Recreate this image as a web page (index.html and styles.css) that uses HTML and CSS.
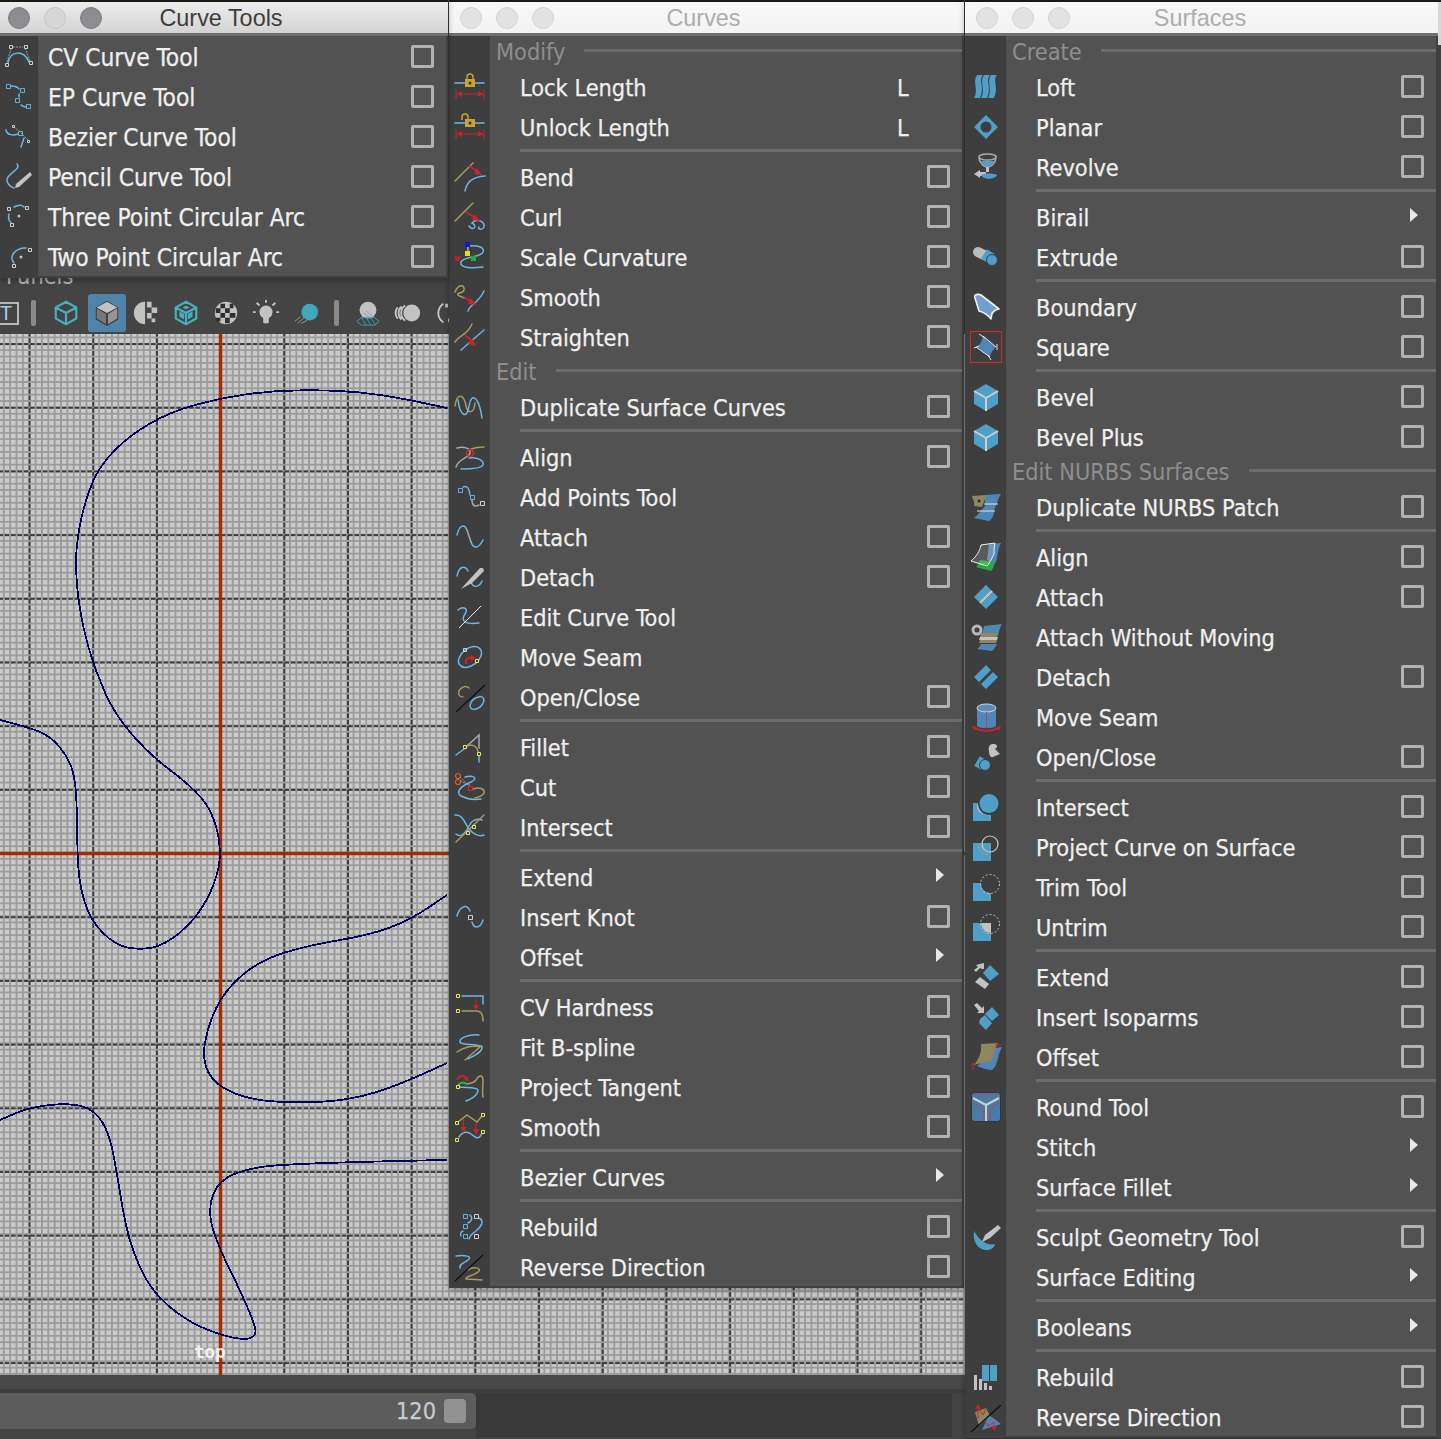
FILE: index.html
```
<!DOCTYPE html>
<html lang="en">
<head>
<meta charset="utf-8">
<title>Curve Tools, Curves, Surfaces menus</title>
<link rel="stylesheet" href="styles.css">
</head>
<body>
<div class="stage">
  <div class="scene">
    <div class="panels">Panels</div>
    <div class="shelf">
      <span class="tbtn">T</span>
      <span class="tsep"></span>
      <span class="tool tool-first"><svg viewBox="0 0 30 30"><path class="tl" d="M15 3L26 9V21L15 27L4 21V9zM4 9L15 15L26 9M15 15V27"/></svg></span>
      <span class="tool tool-on"><svg viewBox="0 0 30 30"><path class="fg2" d="M15 2L27 9V22L15 29L3 22V9z"/><path class="fg" d="M15 3L26 9L15 15L4 9z"/><path class="fd" d="M4 10L14 16V27L4 21z"/><path class="fm" d="M26 10L16 16V27L26 21z"/></svg></span>
      <span class="tool"><svg viewBox="0 0 30 30"><path class="fg" d="M14 3A12 12 0 0 0 14 27z"/><path class="fg" d="M16 3h5v6h-5zM21 9h6v6h-6zM16 15h5v6h-5zM21 21h4v4h-4z"/></svg></span>
      <span class="tool"><svg viewBox="0 0 30 30"><path class="tl" d="M15 3L26 9V21L15 27L4 21V9zM4 9L15 15L26 9M15 15V27"/><path class="fteal" d="M8 13l5 3v6l-5-3zM22 13l-5 3v6l5-3zM11 9l4-2 4 2-4 2z"/></svg></span>
      <span class="tool"><svg viewBox="0 0 30 30"><circle class="fg" cx="15" cy="15" r="12"/><path class="fdark" d="M9 5h5v5H9zM19 5h4v5h-4zM4 10h5v5H4zM14 10h5v5h-5zM9 15h5v5H9zM19 15h6v5h-6zM4 20h5v4H4zM14 20h5v6h-5z"/></svg></span>
      <span class="tool"><svg viewBox="0 0 30 30"><circle class="fg" cx="15" cy="14" r="7"/><rect class="fg" x="12" y="19" width="6" height="7" rx="1"/><path class="gs" d="M15 1V4M5 4L8 7M25 4L22 7M1 14H4M26 14H29"/></svg></span>
      <span class="tool"><svg viewBox="0 0 30 30"><circle class="fteal2" cx="19" cy="14" r="9"/><path class="gs1" d="M3 24L9 19M6 26L13 20M10 26L16 23"/></svg></span>
      <span class="tsep tsep-wide"></span>
      <span class="tool"><svg viewBox="0 0 30 30"><circle class="fg" cx="15" cy="12" r="9"/><path class="gs1" d="M9 14L18 21M13 13L21 19"/><path class="tl1" d="M3 24L8 20H22L27 24L22 28H8zM8 20L13 28M13 20L18 28M18 20L23 28"/></svg></span>
      <span class="tool"><svg viewBox="0 0 30 30"><circle class="fg" cx="19" cy="15" r="9"/><path class="gs" d="M12 7A9.500 9.500 0 0 0 12 23M8 8A9.500 9.500 0 0 0 8 22M4 9A9 9 0 0 0 4 21"/></svg></span>
      <span class="tool"><svg viewBox="0 0 30 30"><path class="gs" d="M10 5A12 12 0 0 0 10 25"/><path class="fg" d="M12 5h3v4h-3zM15 21h3v4h-3z"/></svg></span>
    </div>
    <div class="viewport">
      <svg class="overlay" viewBox="0 334 965 1041">
        <path class="axis" d="M220.500 334V1375M0 853.500H965"/>
        <path class="nurbs" d="M447 408L423.500 403Q400 398 380 395Q360 392 340 391Q320 390 295 390.500Q270 391 245 394.500Q220 398 195 405Q170 412 150 423.500Q130 435 115 450Q100 465 92.500 482.500Q85 500 80.500 522.500Q76 545 76 562.500Q76 580 79 602.500Q82 625 88.500 647.500Q95 670 105 692.500Q115 715 132.500 735Q150 755 170 770Q190 785 201 797.500Q212 810 217 830Q222 850 218.500 867.500Q215 885 205 902.500Q195 920 180 932.500Q165 945 152.500 947.500Q140 950 127.500 947.500Q115 945 102.500 932.500Q90 920 84 900Q78 880 77.500 850Q77 820 76.500 802.500Q76 785 73 772.500Q70 760 60 747.500Q50 735 35 730Q20 725 0 720"/>
        <path class="nurbs" d="M447 895L428.500 907.500Q410 920 390 927.500Q370 935 340 940Q310 945 285 952.500Q260 960 242.500 975Q225 990 216.500 1007.500Q208 1025 205 1042.500Q202 1060 208.500 1072.500Q215 1085 232.500 1092.500Q250 1100 275 1101.500Q300 1103 325 1101.500Q350 1100 375 1092.500Q400 1085 447 1063"/>
        <path class="nurbs" d="M0 1120L15 1113.500Q30 1107 50 1105Q70 1103 82.500 1106.500Q95 1110 102.500 1122.500Q110 1135 114 1157.500Q118 1180 123 1210Q128 1240 139 1265Q150 1290 167.500 1305Q185 1320 202.500 1327.500Q220 1335 232.500 1337.500Q245 1340 250.500 1338Q256 1336 255.500 1330.500Q255 1325 247.500 1307.500Q240 1290 230 1270Q220 1250 214 1232.500Q208 1215 211.500 1200Q215 1185 227.500 1177.500Q240 1170 265 1166.500Q290 1163 447 1160"/>
      </svg>
      <span class="camera">top</span>
    </div>
    <div class="strip"></div>
    <div class="timeline">
      <div class="slider"><span class="frame">120</span><span class="handle"></span></div>
      <div class="range"></div>
    </div>
  </div>

  <section class="win win-tools">
    <header class="bar bar-on"><span class="dot dot-on"></span><span class="dot"></span><span class="dot dot-on"></span><h2 class="title">Curve Tools</h2></header>
    <div class="menu">
      <div class="row"><span class="slot"><svg viewBox="0 0 30 30"><path class="b" d="M4 21C6 8 20 8 25 20"/><path class="g1" d="M3 20L7 7M9 5H19M21 6L26 19"/><path class="sg" d="M1.500 21.500h3v3h-3zM5.500 3.500h3v3h-3zM20.500 3.500h3v3h-3zM25.500 19.500h3v3h-3z"/></svg></span><span class="lbl">CV Curve Tool</span><span class="box"></span></div>
      <div class="row"><span class="slot"><svg viewBox="0 0 30 30"><path class="b" d="M7 4C11 4 14 5 15 7M15 12V15M17 23C19 24 20 25 22 25"/><path class="sb" d="M2.500 2.500h4v4h-4zM16.500 6.500h4v4h-4zM11.500 16.500h4v4h-4zM22.500 22.500h4v4h-4z"/></svg></span><span class="lbl">EP Curve Tool</span><span class="box"></span></div>
      <div class="row"><span class="slot"><svg viewBox="0 0 30 30"><path class="b" d="M2 8C3 13 9 14 14 12M17 25L20 16"/><path class="g1" d="M10 5L17 11L25 19"/><path class="sg" d="M8.500 3.500h2v2h-2zM23.500 18.500h2v2h-2z"/><path class="sb" d="M14.500 9.500h4v4h-4z"/></svg></span><span class="lbl">Bezier Curve Tool</span><span class="box"></span></div>
      <div class="row"><span class="slot"><svg viewBox="0 0 30 30"><path class="b" d="M13 2C17 6 8 10 4 15C1 20 6 25 10 26"/><path class="fg" d="M26 10L28 13L15 25L11 26L12 22z"/></svg></span><span class="lbl">Pencil Curve Tool</span><span class="box"></span></div>
      <div class="row"><span class="slot"><svg viewBox="0 0 30 30"><path class="b" d="M10 5C14 3 18 3 20 5M5 12C4 16 5 19 7 21"/><path class="sg" d="M3.500 5.500h3v3h-3zM21.500 4.500h3v3h-3zM6.500 21.500h3v3h-3z"/><circle class="fg" cx="15" cy="14" r="1.500"/></svg></span><span class="lbl">Three Point Circular Arc</span><span class="box"></span></div>
      <div class="row"><span class="slot"><svg viewBox="0 0 30 30"><path class="b" d="M10 21C5 15 10 6 22 6"/><path class="sg" d="M24.500 6.500h3v3h-3zM8.500 22.500h3v3h-3z"/><circle class="fg" cx="17" cy="15" r="1.500"/></svg></span><span class="lbl">Two Point Circular Arc</span><span class="box"></span></div>
    </div>
  </section>

  <section class="win win-curves">
    <header class="bar"><span class="dot"></span><span class="dot"></span><span class="dot"></span><h2 class="title">Curves</h2></header>
    <div class="menu">
      <div class="head"><span class="hname">Modify</span><span class="hline"></span></div>
      <div class="row"><span class="slot"><svg viewBox="0 0 30 30"><path class="b" d="M0 11H29"/><path class="lock" d="M12 8V5a3 3 0 0 1 6 0V8"/><rect class="fgold" x="10" y="7" width="10" height="8"/><circle class="fdark" cx="15" cy="11" r="1.500"/><path class="r1" d="M1 17V27M29 17V27M1 22H29"/><path class="fr" d="M2 22l5-3v6zM28 22l-5-3v6z"/></svg></span><span class="lbl">Lock Length</span><span class="key">L</span></div>
      <div class="row"><span class="slot"><svg viewBox="0 0 30 30"><path class="b" d="M0 11H29"/><path class="lock" d="M7 8V5a3 3 0 0 1 6 0V7"/><rect class="fgold" x="10" y="7" width="10" height="8"/><circle class="fdark" cx="15" cy="11" r="1.500"/><path class="r1" d="M1 17V27M29 17V27M1 22H29"/><path class="fr" d="M2 22l5-3v6zM28 22l-5-3v6z"/></svg></span><span class="lbl">Unlock Length</span><span class="key">L</span></div>
      <div class="sep"></div>
      <div class="row"><span class="slot"><svg viewBox="0 0 30 30"><path class="t" d="M0 19L18 1"/><path class="b" d="M10 29C12 19 18 15 30 14"/><path class="r" d="M14 4L22 9"/><path class="fr" d="M27 13L19 12L22 6z"/></svg></span><span class="lbl">Bend</span><span class="box"></span></div>
      <div class="row"><span class="slot"><svg viewBox="0 0 30 30"><path class="t" d="M0 19L18 1"/><path class="b" d="M14 24C18 30 23 24 17 21C22 15 30 20 29 25C27 29 22 27 24 25"/><path class="r" d="M11 10L19 15"/><path class="fr" d="M25 19L17 18L20 12z"/></svg></span><span class="lbl">Curl</span><span class="box"></span></div>
      <div class="row"><span class="slot"><svg viewBox="0 0 30 30"><path class="b" d="M14 4C22 3 30 5 28 10C26 16 8 14 6 20C4 27 20 26 28 25"/><path class="w1" d="M13 3V11"/><rect class="fblue0" x="10" y="0" width="5" height="5"/><rect class="fyel" x="10" y="9" width="5" height="5"/><rect class="fred0" x="0" y="14" width="5" height="5"/><rect class="fgreen" x="16" y="14" width="5" height="5"/></svg></span><span class="lbl">Scale Curvature</span><span class="box"></span></div>
      <div class="row"><span class="slot"><svg viewBox="0 0 30 30"><path class="t" d="M0 10C3 2 10 2 9 8C8 12 1 10 3 13C5 15 8 15 10 16"/><path class="b" d="M13 29C15 22 23 22 29 9"/><path class="r" d="M9 15L15 19"/><path class="fr" d="M21 23L13 22L16 16z"/></svg></span><span class="lbl">Smooth</span><span class="box"></span></div>
      <div class="row"><span class="slot"><svg viewBox="0 0 30 30"><path class="t" d="M0 20C5 12 12 14 17 2"/><path class="b" d="M6 28L29 8"/><path class="r" d="M10 13L16 18"/><path class="fr" d="M21 24L13 22L17 16z"/></svg></span><span class="lbl">Straighten</span><span class="box"></span></div>
      <div class="head"><span class="hname">Edit</span><span class="hline"></span></div>
      <div class="row"><span class="slot"><svg viewBox="0 0 30 30"><path class="t" d="M0 14C2 0 9 2 11 14C13 22 19 22 20 11"/><path class="b" d="M3 8C5 24 12 28 14 14C16 0 24 4 27 26"/></svg></span><span class="lbl">Duplicate Surface Curves</span><span class="box"></span></div>
      <div class="sep"></div>
      <div class="row"><span class="slot"><svg viewBox="0 0 30 30"><path class="g" d="M2 6C8 4 16 6 15 11C14 16 4 16 1 25"/><path class="t" d="M14 8C18 6 22 5 29 5"/><path class="b" d="M14 16C24 15 29 19 28 23C26 27 14 27 6 27"/><circle class="rc" cx="15" cy="11" r="3.500"/></svg></span><span class="lbl">Align</span><span class="box"></span></div>
      <div class="row"><span class="slot"><svg viewBox="0 0 30 30"><path class="b" d="M8 5C12 3 14 6 15 13"/><path class="g" d="M17 18C17 24 20 25 24 23"/><path class="sb" d="M3.500 6.500h4v4h-4zM15.500 13.500h4v4h-4z"/><path class="sg" d="M25.500 19.500h4v4h-4z"/></svg></span><span class="lbl">Add Points Tool</span><span class="box box-none"></span></div>
      <div class="row"><span class="slot"><svg viewBox="0 0 30 30"><path class="b" d="M2 13C5 1 10 3 12 8M16 20C19 28 24 26 28 18"/><path class="g" d="M12 8L16 20"/></svg></span><span class="lbl">Attach</span><span class="box"></span></div>
      <div class="row"><span class="slot"><svg viewBox="0 0 30 30"><path class="b" d="M2 14C4 4 10 3 13 9M16 20C18 26 24 26 27 19"/><path class="fg" d="M28 6L29 9L17 21L6 27L14 18L25 6z"/></svg></span><span class="lbl">Detach</span><span class="box"></span></div>
      <div class="row"><span class="slot"><svg viewBox="0 0 30 30"><path class="b" d="M3 8C8 4 14 6 10 12C6 18 8 23 24 21"/><path class="w1" d="M4 26L26 4"/></svg></span><span class="lbl">Edit Curve Tool</span><span class="box box-none"></span></div>
      <div class="row"><span class="slot"><svg viewBox="0 0 30 30"><ellipse class="b" cx="15" cy="15" rx="13" ry="8.500" transform="rotate(-38 15 15)"/><path class="r" d="M11 22C10 17 13 15 17 16"/><path class="fr" d="M21 16L16 13V19z"/><path class="sg" d="M8.500 6.500h3v3h-3z"/><path class="sy" d="M20.500 17.500h3v3h-3z"/></svg></span><span class="lbl">Move Seam</span><span class="box box-none"></span></div>
      <div class="row"><span class="slot"><svg viewBox="0 0 30 30"><path class="t" d="M14 6C9 2 2 8 4 13C5 15 6 15 8 15"/><ellipse class="b" cx="22" cy="21" rx="8" ry="5" transform="rotate(-40 22 21)"/><path class="k1" d="M1 30L30 3"/></svg></span><span class="lbl">Open/Close</span><span class="box"></span></div>
      <div class="sep"></div>
      <div class="row"><span class="slot"><svg viewBox="0 0 30 30"><path class="g" d="M12 14L24 3V16"/><path class="t" d="M11 15C14 12 22 12 23 20"/><path class="b" d="M1 23L9 17M24 24V30"/><path class="sy" d="M8.500 13.500h3v3h-3zM22.500 20.500h3v3h-3z"/></svg></span><span class="lbl">Fillet</span><span class="box"></span></div>
      <div class="row"><span class="slot"><svg viewBox="0 0 30 30"><circle class="orange" cx="3" cy="4" r="2.500"/><circle class="orange" cx="3" cy="10" r="2.500"/><path class="g1" d="M5 5L15 15M5 9L15 13"/><path class="b" d="M10 5C18 3 24 6 16 10C6 14 0 20 6 24C12 27 20 28 26 27"/><path class="t" d="M18 17C26 14 30 18 29 21C28 24 24 25 20 26"/><path class="sr" d="M13.500 14.500h4v4h-4z"/></svg></span><span class="lbl">Cut</span><span class="box"></span></div>
      <div class="row"><span class="slot"><svg viewBox="0 0 30 30"><path class="b" d="M0 3C8 2 10 12 14 17C18 22 24 25 29 23M1 22C5 26 10 22 14 14C17 8 22 6 27 8"/><path class="t" d="M1 30L29 3"/><path class="sy" d="M11.500 19.500h3v3h-3zM17.500 13.500h3v3h-3z"/></svg></span><span class="lbl">Intersect</span><span class="box"></span></div>
      <div class="sep"></div>
      <div class="row"><span class="slot"></span><span class="lbl">Extend</span><span class="sub"></span></div>
      <div class="row"><span class="slot"><svg viewBox="0 0 30 30"><path class="b" d="M2 14C5 3 13 2 15 9M17 20C19 27 25 27 28 18"/><path class="sg" d="M13.500 13.500h4v4h-4z"/></svg></span><span class="lbl">Insert Knot</span><span class="box"></span></div>
      <div class="row"><span class="slot"></span><span class="lbl">Offset</span><span class="sub"></span></div>
      <div class="sep"></div>
      <div class="row"><span class="slot"><svg viewBox="0 0 30 30"><path class="b" d="M7 4H28V12"/><path class="t" d="M7 19H22C26 19 28 22 28 29"/><path class="r1" d="M21 7V14"/><path class="fr" d="M21 18L18 13H24z"/><path class="sy" d="M1.500 2.500h3v3h-3zM1.500 17.500h3v3h-3z"/></svg></span><span class="lbl">CV Hardness</span><span class="box"></span></div>
      <div class="row"><span class="slot"><svg viewBox="0 0 30 30"><path class="b" d="M24 3C14 2 4 6 5 10C6 14 24 11 27 15C28 20 18 24 13 27"/><path class="t" d="M2 20C10 14 18 14 26 14L10 28"/></svg></span><span class="lbl">Fit B-spline</span><span class="box"></span></div>
      <div class="row"><span class="slot"><svg viewBox="0 0 30 30"><path class="t" d="M11 12C16 11 18 12 21 8C24 3 28 2 28 9C28 14 27 20 28 25"/><path class="green" d="M3 13C6 10 9 10 12 12"/><path class="r" d="M2 8C5 3 9 3 11 6"/><path class="fr" d="M14 9L9 8L12 4z"/><path class="b" d="M4 15C12 16 22 15 23 18C23 24 14 28 11 29"/><path class="sy" d="M1.500 13.500h3v3h-3z"/></svg></span><span class="lbl">Project Tangent</span><span class="box"></span></div>
      <div class="row"><span class="slot"><svg viewBox="0 0 30 30"><path class="t" d="M3 10L12 3L22 10L27 4"/><path class="b" d="M4 25C10 16 16 22 20 25C24 27 26 24 27 21"/><path class="r1" d="M8.500 7V16M21 10V18"/><path class="fr" d="M8.500 21L5.500 15H11.500zM21 23L18 17H24z"/><path class="sy" d="M0.500 9.500h3v3h-3zM26.500 1.500h3v3h-3zM26.500 18.500h3v3h-3zM0.500 26.500h3v3h-3z"/></svg></span><span class="lbl">Smooth</span><span class="box"></span></div>
      <div class="sep"></div>
      <div class="row"><span class="slot"></span><span class="lbl">Bezier Curves</span><span class="sub"></span></div>
      <div class="sep"></div>
      <div class="row"><span class="slot"><svg viewBox="0 0 30 30"><path class="b" d="M15 3C19 7 15 10 13 11M8 19C6 20 5 22 6 24M24 6C30 9 26 15 21 19C18 21 15 23 14 27"/><path class="sb" d="M8.500 2.500h4v4h-4zM8.500 12.500h4v4h-4zM8.500 22.500h4v4h-4z"/><path class="sg" d="M19.500 2.500h4v4h-4zM19.500 22.500h4v4h-4z"/></svg></span><span class="lbl">Rebuild</span><span class="box"></span></div>
      <div class="row"><span class="slot"><svg viewBox="0 0 30 30"><path class="b" d="M1 4C10 3 18 4 13 8C8 12 4 12 5 16"/><path class="t" d="M13 18C18 14 26 16 24 19C20 24 10 24 11 27C18 27 22 28 27 28"/><path class="k1" d="M0 29L28 3"/></svg></span><span class="lbl">Reverse Direction</span><span class="box"></span></div>
    </div>
  </section>

  <section class="win win-surfaces">
    <header class="bar"><span class="dot"></span><span class="dot"></span><span class="dot"></span><h2 class="title">Surfaces</h2></header>
    <div class="menu">
      <div class="head"><span class="hname">Create</span><span class="hline"></span></div>
      <div class="row"><span class="slot"><svg viewBox="0 0 30 30"><path class="fb" d="M6 3H12C7 8 14 15 9 26H3C8 18 1 10 6 3z"/><path class="fb" d="M13 3H19C14 8 21 15 16 26H10C15 18 8 10 13 3z"/><path class="fb" d="M20 3H26C21 8 28 15 23 26H17C22 18 15 10 20 3z"/></svg></span><span class="lbl">Loft</span><span class="box"></span></div>
      <div class="row"><span class="slot"><svg viewBox="0 0 30 30"><path class="fb" d="M15 3L27 15L15 27L3 15z"/><circle class="frail" cx="15" cy="15" r="5.500"/></svg></span><span class="lbl">Planar</span><span class="box"></span></div>
      <div class="row"><span class="slot"><svg viewBox="0 0 30 30"><ellipse class="g" cx="16.500" cy="5" rx="8.500" ry="3"/><path class="g" d="M8 5C8 10 12 15 16.500 15C21 15 25 10 25 5"/><path class="fb" d="M10 9H23C22 12 19 14.500 16.500 14.500C14 14.500 11 12 10 9z"/><path class="fg" d="M15 15h3v5h-3zM3 22l6-4v2h6v4H9v2z"/><path class="fb" d="M10 23C14 21 22 21 26 23C24 28 12 28 10 23z"/></svg></span><span class="lbl">Revolve</span><span class="box"></span></div>
      <div class="sep"></div>
      <div class="row"><span class="slot"></span><span class="lbl">Birail</span><span class="sub"></span></div>
      <div class="row"><span class="slot"><svg viewBox="0 0 30 30"><path class="thick-g" d="M7 10L13 13"/><path class="thick-b" d="M13 12L21 17"/><circle class="ring" cx="21" cy="18" r="5.500"/></svg></span><span class="lbl">Extrude</span><span class="box"></span></div>
      <div class="sep"></div>
      <div class="row"><span class="slot"><svg viewBox="0 0 30 30"><path class="patch" d="M4 6C2 2 8 2 10 3L28 17C22 18 20 22 20 27C16 22 12 20 8 19z"/></svg></span><span class="lbl">Boundary</span><span class="box"></span></div>
      <div class="row"><span class="slot"><span class="marked"><svg viewBox="0 0 30 30"><path class="fsteel" d="M12 4L25 15C22 18 20 20 19 25L5 15C9 13 11 9 12 4z"/><path class="w1" d="M8 2L14 6M3 16L8 14M26 12V18M17 23L20 28M12 4L25 15M5 15L19 25"/></svg></span></span><span class="lbl">Square</span><span class="box"></span></div>
      <div class="sep"></div>
      <div class="row"><span class="slot"><svg viewBox="0 0 30 30"><path class="fb" d="M15 2L27 9V22L15 29L3 22V9z"/><path class="gy" d="M15 16L3 9M15 16L27 9M15 16V29"/></svg></span><span class="lbl">Bevel</span><span class="box"></span></div>
      <div class="row"><span class="slot"><svg viewBox="0 0 30 30"><path class="fb" d="M15 2L27 9V22L15 29L3 22V9z"/><path class="gy" d="M15 16L3 9M15 16L27 9M15 16V29"/></svg></span><span class="lbl">Bevel Plus</span><span class="box"></span></div>
      <div class="head"><span class="hname">Edit NURBS Surfaces</span><span class="hline"></span></div>
      <div class="row"><span class="slot"><svg viewBox="0 0 30 30"><path class="fsteel" d="M14 3L30 2C26 8 26 13 23 18C24 23 20 28 18 29L3 26C8 22 10 18 14 14z"/><path class="w1" d="M6 19H24M13 12H27"/><path class="ftan" d="M1 4L15 3C14 8 12 12 11 15L3 14C4 10 2 8 1 4z"/><circle class="fdark" cx="8" cy="9" r="1.500"/></svg></span><span class="lbl">Duplicate NURBS Patch</span><span class="box"></span></div>
      <div class="sep"></div>
      <div class="row"><span class="slot"><svg viewBox="0 0 30 30"><path class="fsteel" d="M18 2L30 1C26 8 27 16 24 22L16 18z"/><path class="fgreen" d="M9 18L24 20C23 24 22 27 20 29L5 25C7 23 8 21 9 18z"/><path class="wo" d="M10 3L24 1C23 5 23 9 23 12C20 18 18 22 16 24L0 19C5 15 9 9 10 3z"/></svg></span><span class="lbl">Align</span><span class="box"></span></div>
      <div class="row"><span class="slot"><svg viewBox="0 0 30 30"><path class="fb" d="M15 3L20 8L8 20L3 15z"/><path class="fg" d="M20 8L22 10L10 22L8 20z"/><path class="fb" d="M22 10L27 15L15 27L10 22z"/></svg></span><span class="lbl">Attach</span><span class="box"></span></div>
      <div class="row"><span class="slot"><svg viewBox="0 0 30 30"><circle class="tyre" cx="6" cy="8" r="4"/><path class="fsteel" d="M13 4L31 2C28 7 28 10 27 14L10 14C12 11 12 8 13 4zM10 22L26 22C24 26 22 28 21 29L6 27C8 26 9 24 10 22z"/><path class="ftan" d="M10 11H27L26 15H9zM9 18H26L25 21H8z"/><path class="fg" d="M9 15H27L26 18H8z"/></svg></span><span class="lbl">Attach Without Moving</span><span class="box box-none"></span></div>
      <div class="row"><span class="slot"><svg viewBox="0 0 30 30"><path class="fb" d="M15 3L20 8L8 20L3 15zM22 10L27 15L15 27L10 22z"/></svg></span><span class="lbl">Detach</span><span class="box"></span></div>
      <div class="row"><span class="slot"><svg viewBox="0 0 30 30"><path class="fsteel" d="M6 6H25V24C22 27 9 27 6 24z"/><ellipse class="cap" cx="15.500" cy="6" rx="9.500" ry="4"/><path class="dash-r" d="M15.500 10V26"/><path class="r" d="M3 25C8 30 23 30 28 25"/><path class="fr" d="M1 24L6 25L3 29zM30 24L25 25L28 29z"/></svg></span><span class="lbl">Move Seam</span><span class="box box-none"></span></div>
      <div class="row"><span class="slot"><svg viewBox="0 0 30 30"><path class="fg" d="M21 2C26 2 28 4 24 7L29 12L22 15C19 16 18 12 18 9C17 6 18 3 21 2z"/><path class="thick-b" d="M6 19L13 23"/><circle class="ring" cx="14" cy="23" r="5.500"/></svg></span><span class="lbl">Open/Close</span><span class="box"></span></div>
      <div class="sep"></div>
      <div class="row"><span class="slot"><svg viewBox="0 0 30 30"><rect class="fb" x="2" y="11" width="18" height="18"/><path class="gs" d="M7 13C7 20 13 22 19 22"/><circle class="frail" cx="18" cy="12" r="11"/><circle class="fb" cx="18" cy="11.500" r="9.500"/></svg></span><span class="lbl">Intersect</span><span class="box"></span></div>
      <div class="row"><span class="slot"><svg viewBox="0 0 30 30"><rect class="fb" x="2" y="11" width="18" height="18"/><circle class="gr" cx="19" cy="12" r="8"/><path class="gs1" d="M7 14C8 20 13 22 17 23M10 12C10 17 13 19 16 20"/></svg></span><span class="lbl">Project Curve on Surface</span><span class="box"></span></div>
      <div class="row"><span class="slot"><svg viewBox="0 0 30 30"><rect class="fb" x="2" y="11" width="18" height="18"/><circle class="frail" cx="19" cy="12" r="9"/><circle class="dashc" cx="19" cy="12" r="9.500"/></svg></span><span class="lbl">Trim Tool</span><span class="box"></span></div>
      <div class="row"><span class="slot"><svg viewBox="0 0 30 30"><rect class="fb" x="2" y="11" width="18" height="18"/><circle class="frail" cx="19" cy="12" r="9"/><path class="fg" d="M10 11H20V21C14 21 10 16 10 11z"/><circle class="dashc" cx="19" cy="12" r="9.500"/></svg></span><span class="lbl">Untrim</span><span class="box"></span></div>
      <div class="sep"></div>
      <div class="row"><span class="slot"><svg viewBox="0 0 30 30"><path class="fb" d="M19 3L28 12L19 19L12 11z"/><path class="fg" d="M9 15L18 22L14 27L4 20z"/><path class="fg" d="M13 1V7H11L9 6L5 10L3 8L7 5L5 3z"/></svg></span><span class="lbl">Extend</span><span class="box"></span></div>
      <div class="row"><span class="slot"><svg viewBox="0 0 30 30"><path class="fb" d="M21 5L28 13L21 19L14 12zM9 17L14 13L21 21L15 28L8 21z"/><path class="fg" d="M3 3L6 1L11 6L13 4V11H6L8 9z"/></svg></span><span class="lbl">Insert Isoparms</span><span class="box"></span></div>
      <div class="row"><span class="slot"><svg viewBox="0 0 30 30"><path class="fsteel" d="M12 8L31 5C26 14 27 24 21 28C15 28 9 25 6 24C11 21 13 14 12 8z"/><path class="ftan" d="M10 2L27 1C23 7 24 14 20 19C14 20 8 21 3 23C8 17 11 10 10 2z"/><path class="r1" d="M25 3H30M2 21V28"/><path class="fr" d="M24 3l3-2v4zM2 20l-2 3h4z"/></svg></span><span class="lbl">Offset</span><span class="box"></span></div>
      <div class="sep"></div>
      <div class="row"><span class="slot"><svg viewBox="0 0 30 30"><rect class="rnd" x="0.500" y="0.500" width="29" height="29" rx="3"/><path class="gy" d="M2 6L15 13L28 6M15 13V29"/><path class="dash-r" d="M2 11L13 17V29M28 11L19 17V29M3 2H27"/></svg></span><span class="lbl">Round Tool</span><span class="box"></span></div>
      <div class="row"><span class="slot"></span><span class="lbl">Stitch</span><span class="sub"></span></div>
      <div class="row"><span class="slot"></span><span class="lbl">Surface Fillet</span><span class="sub"></span></div>
      <div class="sep"></div>
      <div class="row"><span class="slot"><svg viewBox="0 0 30 30"><path class="fb" d="M3 9C1 20 8 28 15 28C20 28 23 26 24 22C16 24 8 18 3 9z"/><path class="fg" d="M27 3L30 6L19 16L11 20L14 13z"/></svg></span><span class="lbl">Sculpt Geometry Tool</span><span class="box"></span></div>
      <div class="row"><span class="slot"></span><span class="lbl">Surface Editing</span><span class="sub"></span></div>
      <div class="sep"></div>
      <div class="row"><span class="slot"></span><span class="lbl">Booleans</span><span class="sub"></span></div>
      <div class="sep"></div>
      <div class="row"><span class="slot"><svg viewBox="0 0 30 30"><path class="fg" d="M3 13h3v15H3zM8 17h3v11H8zM13 21h3v7h-3zM18 24h3v4h-3z"/><path class="fb" d="M11 3h7v16h-7zM19 3h7v16h-7z"/></svg></span><span class="lbl">Rebuild</span><span class="box"></span></div>
      <div class="row"><span class="slot"><svg viewBox="0 0 30 30"><path class="ftan" d="M4 10L15 6L19 14L8 24z"/><path class="fsteel" d="M18 13L30 22L11 28z"/><path class="r1" d="M7 17V6L12 13L15 7M23 27V20L17 24L14 19"/><path class="fr" d="M7 2l-3 5h6zM23 29l-3-5h6z"/><path class="k1" d="M0 30L30 3"/></svg></span><span class="lbl">Reverse Direction</span><span class="box"></span></div>
    </div>
  </section>
  <span class="scroller"></span>
</div>
</body>
</html>
```

FILE: styles.css
```
* { box-sizing: border-box; }
html, body { margin: 0; padding: 0; background: #444; }
.stage { position: relative; width: 1441px; height: 1439px; overflow: hidden; background: #3f3f3f; }

/* backdrop application */
.scene { width: 965px; height: 1439px; display: flex; flex-direction: column; padding-top: 262px; background: #444; }
.panels { height: 30px; padding-left: 6px; font: 23.3px/28px "DejaVu Sans", sans-serif; font-stretch: condensed; color: #b4b4b4; }
.shelf { height: 42px; display: flex; align-items: center; }
.tbtn { width: 19px; height: 23px; margin-right: 7px; border: 2px solid #b8b8b8; border-left: 0; font: 20px/19px "Liberation Sans", sans-serif; color: #9fd0e4; padding-left: 0; }
.tsep { width: 14px; height: 30px; position: relative; display: flex; justify-content: center; align-items: center; margin-right: 6px; }
.tsep::after { content: ""; width: 5px; height: 26px; background: #8a8a8a; border-radius: 2px; }
.tsep-wide { width: 20px; margin-right: 2px; }
.tool { width: 40px; height: 38px; display: flex; align-items: center; justify-content: center; flex: none; }
.tool svg { width: 28px; height: 28px; }
.tool-on { background: #4f84a8; border-radius: 3px; width: 38px; margin: 0 0 0 2px; }
.viewport {
  position: relative; height: 1041px; flex: none;
  background-color: #cacaca;
  background-image:
    linear-gradient(90deg, #9b9b9b 2px, transparent 2px),
    linear-gradient(#9b9b9b 2px, transparent 2px);
  background-size: 6.37px 6.37px, 6.37px 6.37px;
  background-position: 2.9px 0, 0 2.5px;
}
.viewport::before, .viewport::after { content: ""; position: absolute; inset: 0; }
.viewport::before {
  background: linear-gradient(90deg, #3c3c3c 1.5px, transparent 1.5px) 28.6px 0 / 63.7px 100%;
  -webkit-mask: linear-gradient(transparent 2px, #000 2px) 0 2.5px / 100% 6.37px;
  mask: linear-gradient(transparent 2px, #000 2px) 0 2.5px / 100% 6.37px;
}
.viewport::after {
  background: linear-gradient(#3c3c3c 1.5px, transparent 1.5px) 0 9.1px / 100% 63.7px;
  -webkit-mask: linear-gradient(90deg, transparent 2px, #000 2px) 2.9px 0 / 6.37px 100%;
  mask: linear-gradient(90deg, transparent 2px, #000 2px) 2.9px 0 / 6.37px 100%;
}
.overlay { position: absolute; left: 0; top: 0; width: 965px; height: 1041px; z-index: 1; }
.axis { fill: none; stroke: #a32c00; stroke-width: 3.5; }
.nurbs { fill: none; stroke: #00005e; stroke-width: 1.8; stroke-linejoin: round; shape-rendering: crispEdges; }
.camera { position: absolute; z-index: 1; left: 194px; top: 1008px; font: bold 17.5px/20px "DejaVu Sans Mono", monospace; color: #f2f2f2; }
.strip { height: 14px; background: #484848; flex: none; }
.timeline { flex: 1; display: flex; align-items: flex-start; background: #444; border-top: 4px solid #3e3e3e; }
.slider { width: 476px; height: 36px; background: #5c5c5c; border-radius: 0 5px 5px 0; display: flex; align-items: center; justify-content: flex-end; gap: 8px; padding-right: 10px; }
.frame { font: 23.3px/1 "DejaVu Sans", sans-serif; font-stretch: condensed; color: #c6cbd0; -webkit-text-stroke: .25px #c6cbd0; }
.handle { width: 22px; height: 24px; background: #929292; border-radius: 4px; }
.range { width: 476px; height: 44px; background: #393939; }

/* tool windows */
.win { position: absolute; top: 0; background: #3f3f3f; box-shadow: 0 2px 6px rgba(0, 0, 0, .35); }
.win-tools { left: 0; width: 448px; --rail: 38px; padding-right: 2px; z-index: 3; }
.win-curves { left: 449px; width: 515px; --rail: 41px; --indent: 30px; padding-right: 2px; z-index: 2; }
.win-surfaces { left: 965px; width: 476px; --rail: 41px; --indent: 30px; padding-right: 5px; z-index: 2; }
.bar { height: 36px; margin-right: -5px; border-top: 2px solid #1a1a14; border-bottom: 3px solid #6f6f6f; background: linear-gradient(#f8f8f8, #f3f3f3); display: flex; align-items: center; gap: 14px; padding: 0 0 0 11px; position: relative; }
.win-tools .bar, .win-curves .bar { margin-right: -2px; }
.bar-on { background: linear-gradient(#ededed, #d3d3d3); }
.dot { width: 22px; height: 22px; border-radius: 50%; background: #e2e2e2; border: 1px solid #d4d4d4; flex: none; }
.bar-on .dot { background: #d6d6d6; border-color: #c6c6c6; }
.bar-on .dot-on { background: #8c8c91; border-color: #7d7d80; }
.win-tools .bar { padding-left: 8px; }
.title { position: absolute; left: -6px; right: 0; top: 0; margin: 0; text-align: center; font: 400 23.4px/33px "Liberation Sans", sans-serif; color: #adadad; }
.bar-on .title { color: #3d3d3d; }

.menu { padding-top: 2px; background: linear-gradient(90deg, #3e3e3e var(--rail), #525252 var(--rail)); box-shadow: inset 0 -2px 0 #3f3f3f; }
.win-tools .menu { --indent: 10px; }
.row { height: 40px; display: flex; align-items: center; }
.slot { width: var(--rail); height: 40px; flex: none; display: flex; align-items: center; justify-content: center; padding-bottom: 2px; }
.slot > svg, .marked svg { width: 30px; height: 30px; display: block; overflow: visible; }
.marked { display: block; width: 30px; height: 30px; outline: 1px solid #d8262a; }
.lbl { flex: 1; padding-left: var(--indent); font: 23.3px/42px "DejaVu Sans", sans-serif; font-stretch: condensed; color: #efefef; white-space: nowrap; -webkit-text-stroke: .25px #efefef; }
.win-tools .lbl { font-size: 24.3px; }
.box { width: 23px; height: 23px; border: 3px solid #b2b2b2; border-radius: 2px; margin: 0 12px 3px 0; flex: none; }
.box-none { visibility: hidden; }
.key { width: 65px; font: 23.3px/40px "DejaVu Sans", sans-serif; font-stretch: condensed; color: #efefef; -webkit-text-stroke: .25px #efefef; }
.sub { width: 0; height: 0; border-left: 8px solid #e9e9e9; border-top: 7px solid transparent; border-bottom: 7px solid transparent; margin: 0 18px 6px 0; }
.head { height: 30px; display: flex; align-items: center; padding-left: calc(var(--rail) + 6px); gap: 19px; }
.hname { font: 23.3px/28px "DejaVu Sans", sans-serif; font-stretch: condensed; color: #8e8e8e; margin-bottom: 2px; }
.hline { flex: 1; height: 3px; background: #6c6c6c; margin-bottom: 5px; }
.sep { height: 10px; margin-left: calc(var(--rail) + var(--indent)); padding-top: 1px; }
.sep::before { content: ""; display: block; height: 3px; background: #6c6c6c; }
.scroller { position: absolute; left: 1438px; top: 2px; width: 3px; height: 43px; background: #d8d8d8; z-index: 4; }

/* icon paints */
.b, .t, .g, .r, .r1, .g1, .w1, .k1, .gs, .gs1, .gy, .tl, .tl1, .green, .lock, .rc, .orange, .sb, .sg, .sr, .gr, .dashc, .dash-r, .thick-g, .thick-b { fill: none; }
.b { stroke: #6db6e6; stroke-width: 1.5; stroke-linecap: round; }
.t { stroke: #a89a62; stroke-width: 1.5; stroke-linecap: round; }
.g { stroke: #a9a9a9; stroke-width: 1.5; stroke-linecap: round; }
.g1 { stroke: #9a9a9a; stroke-width: 1; stroke-dasharray: 2 1; }
.r { stroke: #c8242a; stroke-width: 2; }
.r1 { stroke: #c8242a; stroke-width: 1; }
.w1 { stroke: #e6e6e6; stroke-width: 1; }
.k1 { stroke: #101010; stroke-width: 1.2; }
.gs { stroke: #c4c4c4; stroke-width: 2; }
.gs1 { stroke: #9d9d9d; stroke-width: 1; }
.gy { stroke: #cfcfcf; stroke-width: 2; }
.tl { stroke: #46aebc; stroke-width: 2.4; stroke-linejoin: round; }
.tl1 { stroke: #3a9fb0; stroke-width: 1; }
.green { stroke: #2fb03a; stroke-width: 2; }
.lock { stroke: #c9a428; stroke-width: 1.5; }
.rc { stroke: #d82b33; stroke-width: 1.5; }
.orange { stroke: #e0601c; stroke-width: 1.2; }
.sb { stroke: #63b2de; stroke-width: 1; }
.sg { stroke: #cfcfcf; stroke-width: 1; }
.sy { stroke: #efe45a; stroke-width: 1; fill: #3e3e3e; }
.sr { stroke: #e2222a; stroke-width: 1.2; }
.gr { stroke: #c8c8c8; stroke-width: 1.2; }
.dashc { stroke: #c8c8c8; stroke-width: 1; stroke-dasharray: 2 2; }
.dash-r { stroke: #dd2a2f; stroke-width: 1; stroke-dasharray: 2 1.500; }
.thick-g { stroke: #bdbdbd; stroke-width: 10; stroke-linecap: round; }
.thick-b { stroke: #4f9fc8; stroke-width: 11; stroke-linecap: butt; }
.ring { fill: #4f9fc8; stroke: #2f3f4a; stroke-width: 1; }
.patch { fill: #6f9fcf; stroke: #f2f2f2; stroke-width: 1.6; stroke-linejoin: round; }
.cap { fill: #5b8dbb; stroke: #c9d8e4; stroke-width: 1; }
.wo { fill: rgba(255, 255, 255, .15); stroke: #f0f0f0; stroke-width: 1; }
.tyre { fill: none; stroke: #b8b8b8; stroke-width: 3; }
.rnd { fill: #4a7aa5; stroke: #27384a; stroke-width: 1; }
.fb { fill: #4f9fc8; }
.fg { fill: #c2c2c2; }
.fg2 { fill: #3c3c3c; }
.fd { fill: #777; }
.fm { fill: #949494; }
.fr { fill: #c8242a; }
.fsteel { fill: #4f86b8; }
.ftan { fill: #8f875e; }
.fdark { fill: #2e2e2e; }
.frail { fill: #3e3e3e; }
.fgold { fill: #c9a428; }
.fyel { fill: #e6dc1e; }
.fgreen { fill: #27a844; }
.fred0 { fill: #b3242a; }
.fblue0 { fill: #1414d8; }
.fteal { fill: #46aebc; }
.fteal2 { fill: #3fa8bb; }
```
